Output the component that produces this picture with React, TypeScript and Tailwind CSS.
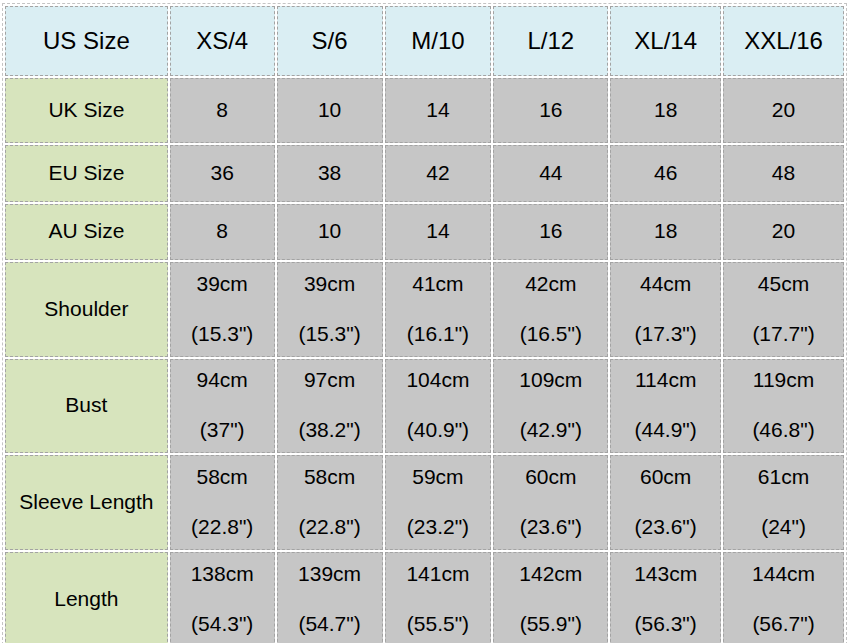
const sizes = ['XS/4', 'S/6', 'M/10', 'L/12', 'XL/14', 'XXL/16'];
const colWidths = ['w-[105px]', 'w-[106px]', 'w-[107px]', 'w-[115px]', 'w-[111px]', 'w-[121px]'];

const simpleRows = [
  { label: 'UK Size', h: 'h-[65px]', values: ['8', '10', '14', '16', '18', '20'] },
  { label: 'EU Size', h: 'h-[57px]', values: ['36', '38', '42', '44', '46', '48'] },
  { label: 'AU Size', h: 'h-[56px]', values: ['8', '10', '14', '16', '18', '20'] },
];

const measureRows = [
  {
    label: 'Shoulder',
    h: 'h-[95px]',
    values: [['39cm', '(15.3")'], ['39cm', '(15.3")'], ['41cm', '(16.1")'], ['42cm', '(16.5")'], ['44cm', '(17.3")'], ['45cm', '(17.7")']],
  },
  {
    label: 'Bust',
    h: 'h-[94px]',
    values: [['94cm', '(37")'], ['97cm', '(38.2")'], ['104cm', '(40.9")'], ['109cm', '(42.9")'], ['114cm', '(44.9")'], ['119cm', '(46.8")']],
  },
  {
    label: 'Sleeve Length',
    h: 'h-[95px]',
    values: [['58cm', '(22.8")'], ['58cm', '(22.8")'], ['59cm', '(23.2")'], ['60cm', '(23.6")'], ['60cm', '(23.6")'], ['61cm', '(24")']],
  },
  {
    label: 'Length',
    h: 'h-[95px]',
    values: [['138cm', '(54.3")'], ['139cm', '(54.7")'], ['141cm', '(55.5")'], ['142cm', '(55.9")'], ['143cm', '(56.3")'], ['144cm', '(56.7")']],
  },
];

const cell = 'border border-dashed border-[#a3a3a3] text-center align-middle p-0';

export default function App() {
  return (
    <div className="min-h-screen bg-white pl-[2px] pt-[3px] text-black" style={{ fontFamily: '"Liberation Sans", Arial, sans-serif' }}>
      <table className="border-separate border-spacing-[2px] border border-dashed border-[#c4c4c4]">
        <tbody>
          <tr>
            <td className={`${cell} w-[163px] h-[70px] bg-[#daeef3] text-[24px]`}>US Size</td>
            {sizes.map((s, i) => (
              <td key={s} className={`${cell} ${colWidths[i]} bg-[#daeef3] text-[24px]`}>
                {s}
              </td>
            ))}
          </tr>
          {simpleRows.map((row) => (
            <tr key={row.label}>
              <td className={`${cell} ${row.h} pb-[2px] bg-[#d7e4bd] text-[21px]`}>{row.label}</td>
              {row.values.map((v, i) => (
                <td key={i} className={`${cell} pb-[2px] bg-[#c6c6c6] text-[21px]`}>
                  {v}
                </td>
              ))}
            </tr>
          ))}
          {measureRows.map((row) => (
            <tr key={row.label}>
              <td className={`${cell} ${row.h} pb-[2px] bg-[#d7e4bd] text-[21px]`}>{row.label}</td>
              {row.values.map(([cm, inch], i) => (
                <td key={i} className={`${cell} pb-[2px] bg-[#c6c6c6] text-[21px]`}>
                  <div className="flex flex-col items-center gap-[26px] leading-[24px]">
                    <span>{cm}</span>
                    <span>{inch}</span>
                  </div>
                </td>
              ))}
            </tr>
          ))}
        </tbody>
      </table>
    </div>
  );
}
